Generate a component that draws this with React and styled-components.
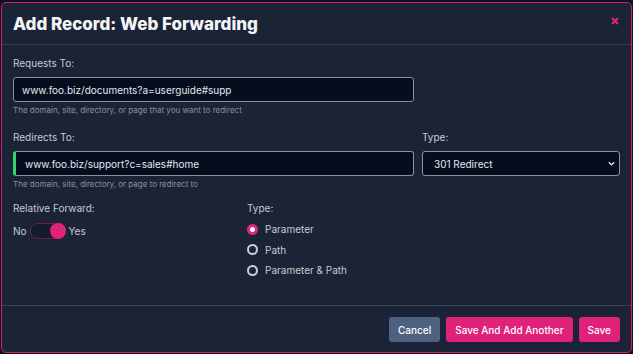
import React from "react";
import styled, { createGlobalStyle } from "styled-components";

const GlobalStyle = createGlobalStyle`
  html, body {
    margin: 0;
    padding: 0;
    background: #0c111c;
    font-family: Inter, "Noto Sans", sans-serif;
  }
  * {
    box-sizing: border-box;
  }
`;

const Modal = styled.div`
  width: 631px;
  height: 351px;
  margin: 2px 0 0 1px;
  display: flex;
  flex-direction: column;
  background: #1b2437;
  border: 1px solid #d21e6e;
  border-radius: 5px;
  overflow: hidden;
`;

const Header = styled.div`
  height: 42px;
  flex: none;
  display: flex;
  align-items: center;
  justify-content: space-between;
  padding: 0 12px 0 11px;
  border-bottom: 1px solid #36404e;
`;

const Title = styled.h1`
  margin: 0;
  font-size: 17px;
  font-weight: 800;
  color: #f4f5f7;
`;

const Close = styled.button`
  border: 0;
  background: none;
  padding: 0;
  width: 8px;
  height: 8px;
  margin-bottom: 5px;
  display: flex;
  color: #e0247a;
`;

const Body = styled.div`
  flex: 1;
  padding: 11px 11px 0 11px;
`;

const Row = styled.div`
  display: grid;
  grid-template-columns: ${p => p.$cols};
  column-gap: 8px;
  margin-bottom: ${p => p.$mb || "0"};
`;

const Field = styled.div`
  display: flex;
  flex-direction: column;
`;

const Label = styled.label`
  font-size: 10px;
  line-height: 14px;
  color: #c5cad2;
  margin-bottom: 7px;
`;

const Input = styled.div`
  height: 25px;
  display: flex;
  align-items: center;
  padding-left: ${p => (p.$valid ? "9px" : "8px")};
  background: #050d1e;
  border: 1px solid #8b919b;
  border-left: ${p => (p.$valid ? "3px solid #33d46b" : "1px solid #8b919b")};
  border-radius: 3px;
  font-size: 10px;
  color: #e6e8eb;
  white-space: nowrap;
  overflow: hidden;
`;

const Select = styled(Input)`
  justify-content: space-between;
  padding: 0 3px 0 11px;
  svg {
    color: #d8dbe0;
  }
`;

const Help = styled.div`
  font-size: 8px;
  line-height: 12px;
  margin-top: 2px;
  color: #89919d;
`;

const SwitchRow = styled.div`
  display: flex;
  align-items: center;
  gap: 3px;
  margin-top: 1px;
  font-size: 10px;
  color: #c5cad2;
`;

const Track = styled.div`
  width: 36px;
  height: 16px;
  border-radius: 8px;
  border: 1px solid #6d1d4c;
  background: #141b2c;
  display: flex;
  justify-content: ${p => (p.$on ? "flex-end" : "flex-start")};
  align-items: center;
`;

const Knob = styled.div`
  width: 16px;
  height: 16px;
  margin-right: -1px;
  border-radius: 50%;
  background: #e0247a;
`;

const RadioList = styled.div`
  display: flex;
  flex-direction: column;
  gap: 4.5px;
  margin-top: -1px;
`;

const RadioItem = styled.div`
  display: flex;
  align-items: center;
  gap: 7px;
  height: 16px;
  font-size: 10px;
  color: #c5cad2;
`;

const Dot = styled.span`
  width: 11px;
  height: 11px;
  border-radius: 50%;
  flex: none;
  background: ${p => (p.$checked ? "#fff" : "#1b2437")};
  border: ${p => (p.$checked ? "3px solid #e0247a" : "2px solid #c9ccd2")};
`;

const Footer = styled.div`
  flex: none;
  display: flex;
  justify-content: flex-end;
  gap: 6px;
  padding: 11px 11px 10px 11px;
  border-top: 1px solid #3a4452;
`;

const Button = styled.button`
  height: 25px;
  padding: 0 ${p => p.$px || "9px"};
  border: 0;
  border-radius: 3px;
  font-family: Inter, "Noto Sans", sans-serif;
  font-size: 10px;
  font-weight: 500;
  color: #fff;
  background: ${p => (p.$variant === "muted" ? "#4d6181" : "#e0217a")};
`;

const radios = ["Parameter", "Path", "Parameter & Path"];

export default function App() {
  return (
    <>
      <GlobalStyle />
      <Modal>
        <Header>
          <Title>Add Record: Web Forwarding</Title>
          <Close aria-label="Close">
            <svg width="8" height="8" viewBox="0 0 8 8">
              <path d="M1 1L7 7M7 1L1 7" stroke="currentColor" strokeWidth="2" />
            </svg>
          </Close>
        </Header>
        <Body>
          <Row $cols="401px 1fr" $mb="14px">
            <Field>
              <Label>Requests To:</Label>
              <Input>www.foo.biz/documents?a=userguide#supp</Input>
              <Help>The domain, site, directory, or page that you want to redirect</Help>
            </Field>
          </Row>
          <Row $cols="401px 1fr" $mb="11px">
            <Field>
              <Label>Redirects To:</Label>
              <Input $valid>www.foo.biz/support?c=sales#home</Input>
              <Help>The domain, site, directory, or page to redirect to</Help>
            </Field>
            <Field>
              <Label>Type:</Label>
              <Select>
                <span>301 Redirect</span>
                <svg width="9" height="9" viewBox="0 0 10 10">
                  <path d="M2 3.5L5 6.5L8 3.5" fill="none" stroke="currentColor" strokeWidth="1.6" />
                </svg>
              </Select>
            </Field>
          </Row>
          <Row $cols="226px 1fr">
            <Field>
              <Label>Relative Forward:</Label>
              <SwitchRow>
                <span>No</span>
                <Track $on>
                  <Knob />
                </Track>
                <span>Yes</span>
              </SwitchRow>
            </Field>
            <Field>
              <Label>Type:</Label>
              <RadioList>
                {radios.map((r, i) => (
                  <RadioItem key={r}>
                    <Dot $checked={i === 0} />
                    {r}
                  </RadioItem>
                ))}
              </RadioList>
            </Field>
          </Row>
        </Body>
        <Footer>
          <Button $variant="muted">Cancel</Button>
          <Button>Save And Add Another</Button>
          <Button>Save</Button>
        </Footer>
      </Modal>
    </>
  );
}
